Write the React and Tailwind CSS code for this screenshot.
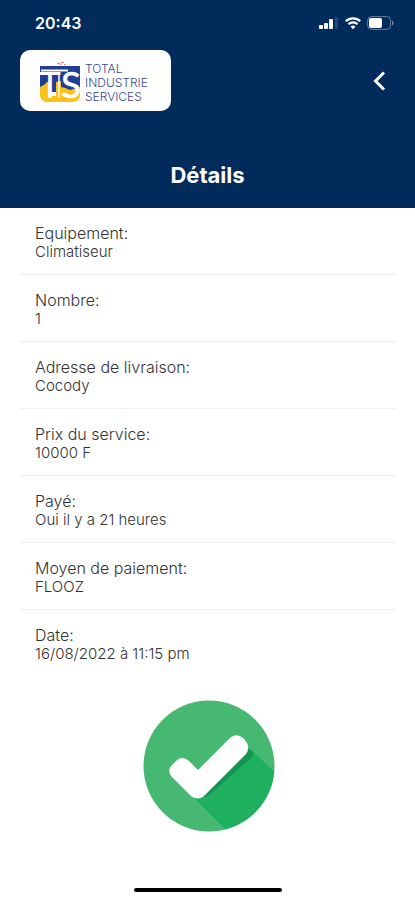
const details = [
    { label: 'Equipement:', value: 'Climatiseur' },
    { label: 'Nombre:', value: '1' },
    { label: 'Adresse de livraison:', value: 'Cocody' },
    { label: 'Prix du service:', value: '10000 F' },
    { label: 'Payé:', value: 'Oui il y a 21 heures' },
    { label: 'Moyen de paiement:', value: 'FLOOZ' },
    { label: 'Date:', value: '16/08/2022 à 11:15 pm' }
];

const StatusBar = () => (
    <div className="flex items-center justify-between pl-[35px] pr-[21px] pt-[11px] text-white">
        <span className="text-base leading-6 font-semibold">20:43</span>
        <div className="flex items-center gap-1.5">
            <svg width="20" height="14" viewBox="0 0 20 14" fill="currentColor">
                <rect x="0" y="9" width="4" height="4" rx="1" />
                <rect x="5" y="7" width="4" height="6" rx="1" />
                <rect x="10" y="3" width="4" height="10" rx="1" />
                <rect x="16" y="1" width="3" height="12" rx="1" opacity="0.15" />
            </svg>
            <svg width="16" height="14" viewBox="0 0 16 14" fill="none" stroke="currentColor" strokeWidth="2.2">
                <path d="M0.8 5.3a10.2 10.2 0 0 1 14.4 0" />
                <path d="M3.5 8.3a6.4 6.4 0 0 1 9 0" />
                <path d="M8 13.2 5.6 10.8a3.4 3.4 0 0 1 4.8 0z" fill="currentColor" stroke="none" />
            </svg>
            <svg width="27" height="14" viewBox="0 0 27 14">
                <rect x="0.6" y="0.6" width="23" height="12.8" rx="4" fill="none" stroke="#fff" strokeOpacity="0.4" />
                <rect x="2" y="2" width="13" height="10" rx="2" fill="#fff" />
                <path d="M25 4.5v5c1-.4 1.5-1.3 1.5-2.5s-.5-2.1-1.5-2.5z" fill="#fff" fillOpacity="0.45" />
            </svg>
        </div>
    </div>
);

const Logo = () => (
    <div className="flex h-[61px] w-[151px] items-center gap-[5px] rounded-[10px] bg-white pt-1 pl-5">
        <svg width="40" height="42" viewBox="0 0 40 42" className="shrink-0 overflow-visible">
            <path d="M0 4h40v26H0z" fill="#1f3f94" />
            <path d="M0 25l4-2 3-3 4 1v13h5V20l5-1v6l4 1 5 2 10-3v8a7 7 0 0 1-7 7H7a7 7 0 0 1-7-7z" fill="#fbc21a" />
            <path d="M17 2l2-1 2 2M21 1l3-1M24 3l2-1" stroke="#ee6f61" fill="none" />
            <path d="M19 11v25" stroke="#fff" strokeWidth="1.5" />
            <path d="M1 8.500h27" stroke="#fff" strokeWidth="2" />
            <text x="-1" y="36" fill="#fff" fontSize="37" fontFamily="Lato, sans-serif">T</text>
            <text x="21" y="36" fill="#fff" stroke="#fff" strokeWidth="0.6" fontSize="37" fontFamily="Lato, sans-serif">S</text>
        </svg>
        <div className="text-[12px] leading-[14px] font-light text-[#3b4790]">
            <div>TOTAL</div>
            <div>INDUSTRIE</div>
            <div>SERVICES</div>
        </div>
    </div>
);

const SuccessBadge = () => (
    <svg width="132" height="132" viewBox="0 0 132 132" role="img" aria-label="Payé">
        <clipPath id="disc">
            <circle cx="66" cy="66" r="65.5" />
        </clipPath>
        <g clipPath="url(#disc)">
            <rect width="132" height="132" fill="#47b871" />
            <path d="M50 97 104 46l36 34v60H93z" fill="#1fb160" />
            <path d="M60 97 104 48l6 4c0 3-1 5-3 7L65 96z" fill="#15954f" />
        </g>
        <path
            d="M29 65l4-4q6-6 13 0l9 9 31-31q7-7 14-1l2 2q6 7 1 14L61 96q-6 5-13 0L30 78q-7-7-1-13z"
            fill="#fff"
        />
    </svg>
);

const App = () => {
    return (
        <div className="flex min-h-screen flex-col bg-white font-[Inter,sans-serif] text-[#333333]">
            <header className="bg-[#012b5b] pb-[17px]">
                <StatusBar />
                <div className="flex items-center justify-between pt-[15px] pl-5 pr-[23px]">
                    <Logo />
                    <button type="button" aria-label="Retour" className="p-1 text-white">
                        <svg width="16" height="20" viewBox="0 0 16 20" fill="none" stroke="currentColor" strokeWidth="3">
                            <path d="M12 1.5 3.5 10l8.5 8.5" />
                        </svg>
                    </button>
                </div>
                <h1 className="mt-12 text-center text-[22px] leading-8 font-bold text-white">Détails</h1>
            </header>

            <main className="flex flex-col items-center">
                <dl className="w-full pl-5 pr-[19px]">
                    {details.map((item) => (
                        <div key={item.label} className="border-b border-[#f1f1f1] px-[15px] pt-[15px] pb-[13px] last:border-b-0">
                            <dt className="text-base leading-5 font-light">{item.label}</dt>
                            <dd className="text-[15px] leading-[18px] font-light">{item.value}</dd>
                        </div>
                    ))}
                </dl>
                <div className="mt-6 pl-[3px]">
                    <SuccessBadge />
                </div>
            </main>

            <div className="mx-auto mt-auto mb-2 h-1 w-[148px] rounded-full bg-black" />
        </div>
    );
};

export default App;
